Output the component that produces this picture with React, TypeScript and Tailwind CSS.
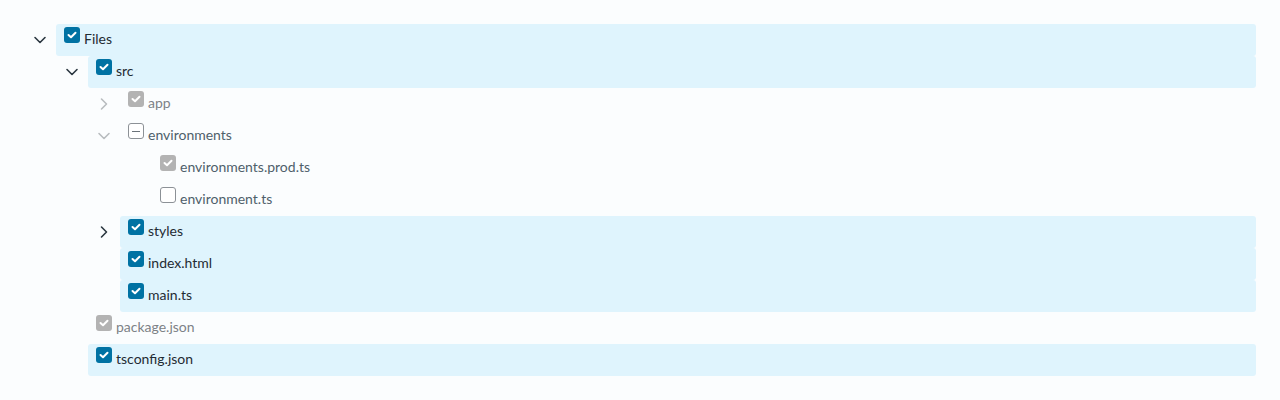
import React from 'react'

type CheckState = 'checked' | 'disabled' | 'indeterminate' | 'unchecked'

interface Node {
  label: string
  level: number
  caret?: 'down' | 'right'
  caretMuted?: boolean
  check: CheckState
  selected?: boolean
  textTone?: 'dark' | 'muted' | 'slate'
}

const nodes: Node[] = [
  { label: 'Files', level: 0, caret: 'down', check: 'checked', selected: true },
  { label: 'src', level: 1, caret: 'down', check: 'checked', selected: true },
  { label: 'app', level: 2, caret: 'right', caretMuted: true, check: 'disabled', textTone: 'muted' },
  { label: 'environments', level: 2, caret: 'down', caretMuted: true, check: 'indeterminate', textTone: 'slate' },
  { label: 'environments.prod.ts', level: 3, check: 'disabled', textTone: 'slate' },
  { label: 'environment.ts', level: 3, check: 'unchecked', textTone: 'slate' },
  { label: 'styles', level: 2, caret: 'right', check: 'checked', selected: true },
  { label: 'index.html', level: 2, check: 'checked', selected: true },
  { label: 'main.ts', level: 2, check: 'checked', selected: true },
  { label: 'package.json', level: 1, check: 'disabled', textTone: 'muted' },
  { label: 'tsconfig.json', level: 1, check: 'checked', selected: true },
]

const indent = ['w-0', 'w-8', 'w-16', 'w-24']

function Caret({ dir, muted }: { dir: 'down' | 'right'; muted?: boolean }) {
  const color = muted ? '#b8bcbf' : '#2b3740'
  if (dir === 'down') {
    return (
      <svg width="14" height="14" viewBox="0 0 14 14" fill="none">
        <path d="M2 4.5L7 9.5L12 4.5" stroke={color} strokeWidth="1.6" strokeLinecap="round" strokeLinejoin="round" />
      </svg>
    )
  }
  return (
    <svg width="14" height="14" viewBox="0 0 14 14" fill="none">
      <path d="M4.5 2L9.5 7L4.5 12" stroke={color} strokeWidth="1.6" strokeLinecap="round" strokeLinejoin="round" />
    </svg>
  )
}

function Checkbox({ state }: { state: CheckState }) {
  if (state === 'checked' || state === 'disabled') {
    return (
      <span
        className={`mt-[3px] flex h-4 w-4 shrink-0 items-center justify-center rounded-[3px] ${
          state === 'checked' ? 'bg-[#0072a3]' : 'bg-[#b3b3b3]'
        }`}
      >
        <svg width="10" height="8" viewBox="0 0 10 8" fill="none">
          <path d="M1.5 4L4 6.3L8.5 1.7" stroke="white" strokeWidth="2" strokeLinecap="round" strokeLinejoin="round" />
        </svg>
      </span>
    )
  }
  return (
    <span className="mt-[3px] flex h-4 w-4 shrink-0 items-center justify-center rounded-[3px] border border-[#8c9196] bg-white">
      {state === 'indeterminate' && <span className="h-px w-2 bg-[#6b737a]" />}
    </span>
  )
}

function Row({ node }: { node: Node }) {
  const tone =
    node.textTone === 'muted'
      ? 'text-[#7d8287]'
      : node.textTone === 'slate'
        ? 'text-[#4f5f6b]'
        : 'text-[#1f2b33]'
  return (
    <div className="flex h-8">
      <div className={`${indent[node.level]} shrink-0`} />
      <div className="flex w-8 shrink-0 items-center justify-center">
        {node.caret && <Caret dir={node.caret} muted={node.caretMuted} />}
      </div>
      <div
        className={`flex flex-1 items-start gap-1 rounded-[3px] px-2 ${node.selected ? 'bg-[#dff4fd]' : ''}`}
      >
        <Checkbox state={node.check} />
        <span className={`mt-[5px] text-[14px] leading-5 ${tone}`}>{node.label}</span>
      </div>
    </div>
  )
}

export default function App() {
  return (
    <div
      className="h-[400px] w-[1280px] bg-[#fbfdfe] px-6 pt-6"
      style={{ fontFamily: 'Lato, "Open Sans", sans-serif' }}
    >
      {nodes.map((n) => (
        <Row key={n.label} node={n} />
      ))}
    </div>
  )
}
